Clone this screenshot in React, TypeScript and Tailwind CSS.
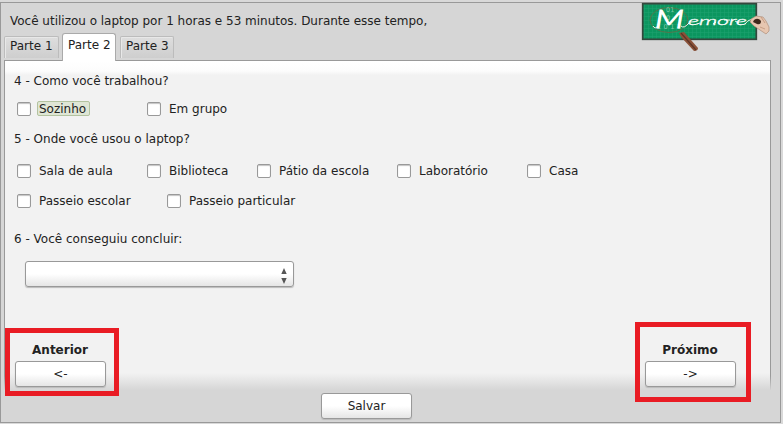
import React from "react";

function Check({ label, width, active }: { label: string; width: string; active?: boolean }) {
  return (
    <label className={`flex shrink-0 items-center ${width}`}>
      <span className="h-3.5 w-3.5 shrink-0 rounded-[2px] border border-[#999] bg-white shadow-[inset_0_1px_1px_#c4c4c4]" />
      {active ? (
        <span className="ml-1.5 h-[15px] w-[53px] rounded-[2px] border border-[#b3c3a0] bg-[#dfe6d5] pl-px leading-[15px] whitespace-nowrap">{label}</span>
      ) : (
        <span className="ml-2 leading-[14px] whitespace-nowrap">{label}</span>
      )}
    </label>
  );
}

function Button({ children }: { children: React.ReactNode }) {
  return (
    <button className="block h-[26px] w-[91px] rounded-[3px] border border-[#999] bg-linear-to-b from-white from-50% to-[#e5e5e5] text-center leading-6 shadow-[0_1px_1px_#bbb]">
      {children}
    </button>
  );
}

function Logo() {
  return (
    <svg className="absolute top-0 left-[640px] h-[54px] w-[134px]" viewBox="640 0 134 54">
      <defs>
        <pattern id="grid" width="4" height="4" patternUnits="userSpaceOnUse">
          <rect width="4" height="4" fill="#0b965f" />
          <path d="M0 0H4M0 0V4" stroke="#1fa270" strokeWidth="1" />
        </pattern>
      </defs>
      <rect x="642.7" y="3.7" width="113.6" height="35.6" fill="url(#grid)" stroke="#34483d" strokeWidth="1.7" />
      <ellipse cx="669" cy="20" rx="19" ry="12.5" fill="none" stroke="#56734a" strokeWidth="1" />
      <g className="font-['DejaVu_Sans',sans-serif]" fill="#7cc9a8" fontSize="6.5">
        <text x="666" y="12">01</text>
        <text x="666" y="20">0</text>
        <text x="657" y="28.5" textLength="24">1011</text>
      </g>
      <g className="font-['Lato',sans-serif] font-light italic" fill="white">
        <text x="655" y="28" fontSize="25" stroke="white" strokeWidth="1" textLength="29" lengthAdjust="spacingAndGlyphs">M</text>
        <text x="688" y="25" fontSize="12" stroke="white" strokeWidth="0.3" textLength="59" lengthAdjust="spacingAndGlyphs">emore</text>
      </g>
      <path d="M653 26Q655 30 659 25M681 26Q684 29 689 23M697 24L700 23M713 24L716 22M724 20L730 20M735 21L739 23M745 24Q750 17 758 20" fill="none" stroke="white" strokeWidth="0.9" />
      <path d="M679 33L684 32L698 48Q698 51 694 51L681 37Z" fill="#8a5138" />
      <path d="M681 33L696 50" stroke="#5c3526" strokeWidth="1.2" />
      <path d="M751 19L756 16L763 17L766 21L769 27V31L766 34L760 30L754 26L750 22Z" fill="#e6c6b0" stroke="#a7846f" strokeWidth="0.6" />
      <path d="M754 20Q758 17 761 21Q761 25 757 24L753 22Z" fill="#3f291c" />
      <path d="M761 17L765 23M760 27L765 29" stroke="#b98c73" strokeWidth="0.7" />
    </svg>
  );
}

export default function App() {
  return (
    <div className="relative h-[424px] w-[783px] overflow-hidden bg-[#d9d9d9] pt-[2px] font-['DejaVu_Sans',sans-serif] text-[12px] text-[#222]">
      <div className="h-[421px] w-[781px] border border-[#999] bg-[#d6d6d6]">
        <header className="h-[30px] pt-[11px] pl-[9px] leading-[15px] tracking-[-0.01px]">
          Você utilizou o laptop por 1 horas e 53 minutos. Durante esse tempo,
        </header>
        <nav className="flex h-[27px] items-end pl-[3px]">
          <div className="mb-[2px] h-[22px] w-[55px] rounded-t-[2px] border border-b-0 border-[#bcbcbc] bg-linear-to-b from-[#dedede] to-[#cecece] pl-[5px] leading-[18px] shadow-[inset_1px_1px_#e8e8e8]">Parte 1</div>
          <div className="relative z-10 -mb-px ml-[3px] h-[28px] w-[54px] rounded-t-[3px] border border-b-0 border-[#aaa] bg-white pl-[5px] leading-[22px]">Parte 2</div>
          <div className="mb-[2px] ml-[4px] h-[22px] w-[54px] rounded-t-[2px] border border-b-0 border-[#bcbcbc] bg-linear-to-b from-[#dedede] to-[#cecece] pl-[5px] leading-[18px] shadow-[inset_1px_1px_#e8e8e8]">Parte 3</div>
        </nav>
        <main className="ml-[3px] h-[330px] w-[767px] border-t border-[#999] bg-linear-to-b from-[#999] from-[315px] to-[#d6d6d6] to-[330px] px-px">
          <div className="h-[329px] bg-[linear-gradient(to_bottom,white_0,#fcfcfc_10px,#f2f2f2_14px,#f2f2f2_312px,#d6d6d6_329px)] pt-[13px]">
            <h2 className="pl-[9px] leading-[15px]">4 - Como você trabalhou?</h2>
            <div className="mt-[12px] flex h-[15px] items-center pl-3">
              <Check label="Sozinho" width="w-[130px]" active />
              <Check label="Em grupo" width="w-[100px]" />
            </div>
            <h2 className="mt-[16px] pl-[9px] leading-[15px]">5 - Onde você usou o laptop?</h2>
            <div className="mt-[16px] flex h-[15px] items-center pl-3">
              <Check label="Sala de aula" width="w-[130px]" />
              <Check label="Biblioteca" width="w-[110px]" />
              <Check label="Pátio da escola" width="w-[140px]" />
              <Check label="Laboratório" width="w-[130px]" />
              <Check label="Casa" width="w-[80px]" />
            </div>
            <div className="mt-[15px] flex h-[15px] items-center pl-3">
              <Check label="Passeio escolar" width="w-[150px]" />
              <Check label="Passeio particular" width="w-[150px]" />
            </div>
            <h2 className="mt-[24px] pl-[9px] leading-[15px]">6 - Você conseguiu concluir:</h2>
            <div className="mt-[14px] ml-5 flex h-[26px] w-[269px] items-center justify-end rounded-[3px] border border-[#999] bg-linear-to-b from-white from-50% to-[#e5e5e5] pr-[6px] shadow-[0_1px_1px_#bbb]">
              <svg className="mt-1 h-4 w-[6px]" viewBox="0 0 6 16" fill="#555"><path d="M3 0L5.7 6H.3ZM.3 10H5.7L3 16Z" /></svg>
            </div>
            <div className="mt-[35px] flex items-start justify-between pr-[19px]">
              <div className="mt-[6px] flex h-[68px] w-[114px] flex-col border-[5px] border-[#e91c24] pt-[10px] pl-[5px]">
                <b className="w-[90px] text-center leading-[15px]">Anterior</b>
                <div className="mt-[3px]"><Button>&lt;-</Button></div>
              </div>
              <div className="flex h-[80px] w-[116px] flex-col border-[5px] border-[#e91c24] pt-[16px] pl-[5px]">
                <b className="w-[90px] text-center leading-[15px]">Próximo</b>
                <div className="mt-[3px]"><Button>-&gt;</Button></div>
              </div>
            </div>
          </div>
        </main>
        <footer className="flex justify-start pt-[3px] pl-[320px]"><Button>Salvar</Button></footer>
      </div>
      <Logo />
    </div>
  );
}
